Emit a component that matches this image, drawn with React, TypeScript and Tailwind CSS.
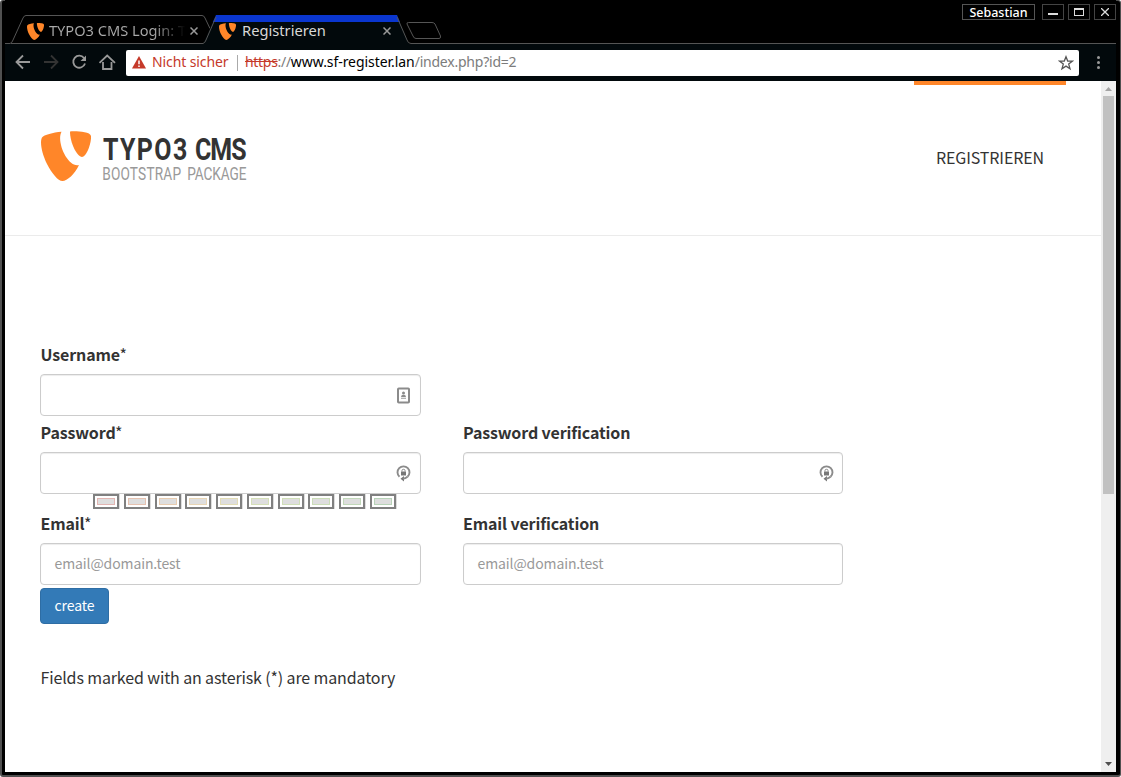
import React from 'react';

const bodyFont = "font-['Noto_Sans_CJK_SC','Open_Sans',sans-serif]";
const chromeFont = "font-['Noto_Sans','Open_Sans',sans-serif]";

function Shield({ size }: { size: number }) {
  return (
    <svg width={size} height={size} viewBox="0 0 50 50" className="block shrink-0" fill="#ff8629">
      <path d="M20.500 0.800C12 1.500 3 4 1 6.500C-1.500 11 1 23 6 33C11 42.500 17 50 21.500 50C26 50 34 43 38 34C27 37 15 11 20.500 0.800Z" />
      <path d="M29 0.600C31 0 49 0 50 5C50.500 13 45 26 41 26C36 26 29 12 29 0.600Z" />
    </svg>
  );
}

function TabClose() {
  return (
    <svg width="8" height="8" viewBox="0 0 8 8" className="block shrink-0" stroke="#999" strokeWidth="1.5">
      <path d="M0.500 0.500L7.500 7.500M7.500 0.500L0.500 7.500" />
    </svg>
  );
}

function TabStrip() {
  return (
    <div className="relative h-[44px] shrink-0 bg-black">
      <svg width="1111" height="44" viewBox="5 0 1111 44" className="absolute left-0 top-0" fill="none" stroke="#555" strokeWidth="1">
        <path d="M4 43.500H10Q12 43 13 40L23 18Q24 15.500 26 15.500H202Q204 15.500 205 18L210 28.500" />
        <path d="M11 43.500H203" />
        <path d="M203 44L216 15H397L409 44Z" fill="#02090c" stroke="none" />
        <path d="M212.900 22L216 15H397L400 22Z" fill="#0a36cf" stroke="none" />
        <path d="M203 43.500Q205 43 206 40L216 17M397 17L407 40Q408 43.500 411 43.500H1116" />
        <path d="M408.500 22.500H432Q434 22.500 435 24L440.500 36Q441 38.500 439 38.500H416Q414 38.500 413 36L407 24Q406.500 22.500 408.500 22.500Z" />
      </svg>
      <div className={`relative flex items-start pt-[20px] text-[15px] leading-[20px] ${chromeFont}`}>
        <div className="ml-[22px] flex w-[173px] items-center">
          <Shield size={17} />
          <span className="ml-[5px] w-[139px] whitespace-nowrap bg-linear-to-r from-[#aaa] from-75% to-transparent to-98% bg-clip-text pb-[2px] text-[14.6px] text-transparent">TYPO3 CMS Login: T</span>
          <span className="ml-[2px]"><TabClose /></span>
        </div>
        <div className="ml-[19px] flex w-[173px] items-center text-[#d8d8d8]">
          <Shield size={17} />
          <span className="ml-[6px] w-[141px] pb-[2px] text-[14.7px]">Registrieren</span>
          <TabClose />
        </div>
      </div>
      <div className="absolute right-0 top-[4px] flex h-4 items-center">
        <div className="mr-[7px] flex h-4 w-[73px] items-center justify-center border border-[#555] pt-[2px] font-['Noto_Sans',sans-serif] text-[12.5px] font-medium leading-none text-white">Sebastian</div>
        <div className="mr-1 flex h-4 w-[22px] items-center justify-center border border-[#444]"><i className="mt-[3px] h-[2px] w-[10px] bg-[#ddd]" /></div>
        <div className="mr-1 flex h-4 w-[22px] items-center justify-center border border-[#444]"><i className="h-2 w-[10px] border border-t-2 border-[#ddd]" /></div>
        <div className="flex h-4 w-[22px] items-center justify-center border border-[#444]">
          <svg width="8" height="8" viewBox="0 0 8 8" stroke="#ddd" strokeWidth="1.3"><path d="M0 0L8 8M8 0L0 8" /></svg>
        </div>
      </div>
    </div>
  );
}

function Toolbar() {
  return (
    <div className="flex h-[37px] shrink-0 items-center bg-[#02090c]">
      <svg width="121" height="37" viewBox="5 44 121 37" className="shrink-0" fill="none" stroke="#999" strokeWidth="1.8">
        <path d="M30 62H17M23 55.500L16.500 62L23 68.500" />
        <path d="M44 62H57M51 55.500L57.500 62L51 68.500" stroke="#333" />
        <path d="M84 58A6 6 0 1 0 85 63.500" />
        <path d="M86 55.500V61H80.500Z" fill="#999" stroke="none" />
        <path d="M103 62V69H111.500V62M99.500 62.800L107.200 55.500L115 62.800" />
      </svg>
      <div className={`flex h-[26px] w-[953px] items-center rounded-[2px] bg-white text-[14px] ${chromeFont}`}>
        <svg width="14" height="13" viewBox="0 0 14 13" className="mb-px ml-[6px] shrink-0"><path d="M7 0L14 12.500H0Z" fill="#c53929" /><path d="M7 4.500V8.300M7 9.500V11" stroke="#fff" strokeWidth="1.500" /></svg>
        <span className="mb-[2px] ml-[6px] w-[77px] whitespace-nowrap text-[14px] tracking-[-0.1px] text-[#c53929]">Nicht sicher</span>
        <i className="ml-[8px] h-[16px] w-px bg-[#aaa]" />
        <span className="mb-[2px] ml-[7px] whitespace-nowrap tracking-[-0.22px] text-[#7c7c7c]">
          <span className="tracking-[-0.3px]"><span className="text-[#c53929] line-through">https</span>://</span><span className="tracking-[-0.06px] text-black">www.sf-register.lan</span>/index.php?id=2
        </span>
        <svg width="16" height="16" viewBox="0 0 16 16" className="ml-auto mr-[5px]" fill="none" stroke="#555" strokeWidth="1.3"><path d="M8 1.700L9.700 6L14.300 6.200L10.700 9.100L12 13.700L8 11.100L4 13.700L5.300 9.100L1.700 6.200L6.300 6Z" /></svg>
      </div>
      <div className="ml-[18px] flex flex-col gap-[2px]"><i className="size-[3px] rounded-full bg-[#999]" /><i className="size-[3px] rounded-full bg-[#999]" /><i className="size-[3px] rounded-full bg-[#999]" /></div>
    </div>
  );
}

function UserIcon() {
  return (
    <svg width="13" height="17" viewBox="0 0 13 17" fill="none">
      <rect x="1" y="1.500" width="11" height="14" rx="0.800" stroke="#8b8b8b" strokeWidth="2" />
      <circle cx="6.500" cy="6" r="1.500" fill="#8b8b8b" /><path d="M4 10Q4 7.800 6.500 7.800T9 10Z" fill="#8b8b8b" />
      <path d="M4 11.300H9" stroke="#aaa" strokeWidth="1.200" />
    </svg>
  );
}

function LockIcon() {
  return (
    <svg width="15" height="18" viewBox="0 0 15 18" fill="none">
      <path d="M3.500 12.800A6 6 0 1 1 11.500 12.800" stroke="#8b8b8b" strokeWidth="1.900" />
      <path d="M5 7.500H10V11.500H5Z" fill="#777" /><path d="M6 7.500V6.500Q6 5.300 7.500 5.300T9 6.500V7.500" stroke="#888" />
      <path d="M4.500 14.700L8 12V17.400Z" fill="#777" /><path d="M7 14.700Q9.500 14.700 11.500 12.800" stroke="#8b8b8b" strokeWidth="1.900" />
    </svg>
  );
}

type FieldProps = {
  label: string;
  required?: boolean;
  placeholder?: string;
  icon?: React.ReactNode;
  labelClass?: string;
  widthClass?: string;
};

function Field({ label, required, placeholder, icon, labelClass = 'h-9 pb-[4px] pl-[0.5px]', widthClass = 'w-[381px] pr-0' }: FieldProps) {
  return (
    <div className={widthClass}>
      <div className={`flex items-center text-[16px] leading-6 tracking-[-0.13px] text-[#333] ${labelClass}`}>
        <b className="font-bold">{label}</b>
        {required && <span className="-ml-[0.5px]">*</span>}
      </div>
      <div className="flex h-[42px] items-center rounded-[4px] border border-[#ccc] bg-white pl-[14px] pr-[9px] shadow-[inset_0_1px_1px_rgba(0,0,0,0.075)]">
        {placeholder && <span className="-ml-[0.5px] pb-[2px] text-[14px] leading-5 tracking-[-0.1px] text-[#999]">{placeholder}</span>}
        <span className="ml-auto flex w-[15px] justify-center">{icon}</span>
      </div>
    </div>
  );
}

const meterColors = ['border-[#e2b5b2]', 'border-[#e6c2b0]', 'border-[#e8ccb0]', 'border-[#e8d5b5]', 'border-[#e2dcb5]', 'border-[#d5dfb8]', 'border-[#d0dfb8]', 'border-[#cbddb8]', 'border-[#c2d8ba]', 'border-[#b8d3b8]'];

function StrengthMeter() {
  return (
    <div className="flex h-[15px] gap-[4.780px] pl-[53px]">
      {meterColors.map((c) => (
        <div key={c} className="h-[15px] w-[26px] shrink-0 border-2 border-[#808080] bg-white p-[2px] shadow-[1px_0_0_#ddd]">
          <div className={`h-full border bg-[#dedede] ${c}`} />
        </div>
      ))}
    </div>
  );
}

function Logo() {
  return (
    <div className="flex h-[51px] gap-[12px]">
      <Shield size={50} />
      <svg width="160" height="56" viewBox="0 0 160 56" className="overflow-visible font-['Roboto',sans-serif]">
        <g transform="scale(0.78 1)">
          <text x="0" y="28.500" fontSize="32" fontWeight="700" fill="#333" textLength="108">TYPO3</text>
          <text x="118" y="28.500" fontSize="32" fontWeight="700" fill="#333" textLength="66">CMS</text>
          <text x="-1" y="49" fontSize="17.500" fontWeight="400" fill="#999" textLength="101">BOOTSTRAP</text>
          <text x="108" y="49" fontSize="17.500" fontWeight="400" fill="#999" textLength="76">PACKAGE</text>
        </g>
      </svg>
    </div>
  );
}

function Page() {
  return (
    <main className={`flex-1 bg-white text-[#333] ${bodyFont}`}>
      <header className="flex h-[155px] justify-between border-b border-[#ebebeb] pl-[36px] pr-[35px]">
        <div className="pt-[50px]"><Logo /></div>
        <nav className="flex w-[152px] items-center justify-center border-t-4 border-[#ff8629] pb-[6px] text-[16px] leading-6 tracking-[-0.12px]">REGISTRIEREN</nav>
      </header>
      <form className="flex flex-col items-start pl-[35px] pt-[102px]">
        <Field label="Username" required icon={<UserIcon />} />
        <div className="flex gap-[42px]">
          <Field label="Password" required icon={<LockIcon />} />
          <Field label="Password verification" labelClass="h-9 pb-[4px]" widthClass="w-[380px]" icon={<span className="-mr-[2px]"><LockIcon /></span>} />
        </div>
        <StrengthMeter />
        <div className="flex gap-[42px]">
          <Field label="Email" required placeholder="email@domain.test" labelClass="h-[34px] pb-[6px] pl-[0.5px]" />
          <Field label="Email verification" widthClass="w-[380px]" placeholder="email@domain.test" labelClass="h-[34px] pb-[6px]" />
        </div>
        <button type="button" className="mt-[3px] flex h-9 w-[69px] items-center justify-center rounded-[4px] border border-[#2e6da4] bg-[#337ab7] pb-[2px] text-[14px] leading-5 tracking-[-0.1px] text-white">create</button>
        <p className="mt-[41px] pl-[0.5px] text-[16px] leading-6 tracking-[-0.13px]">Fields marked with an asterisk (*) are mandatory</p>
      </form>
    </main>
  );
}

function Scrollbar() {
  return (
    <div className="flex w-[15px] shrink-0 flex-col items-center bg-[#efefef]">
      <svg width="15" height="15" viewBox="0 0 15 15" className="block"><path d="M4 10L7.500 6L11 10Z" fill="#a3a3a3" /></svg>
      <div className="h-[398px] w-[11px] bg-[#c1c1c1]" />
      <svg width="15" height="15" viewBox="0 0 15 15" className="mt-auto block"><path d="M4 5L7.500 9L11 5Z" fill="#505050" /></svg>
    </div>
  );
}

export default function App() {
  return (
    <div className="h-[777px] w-[1121px] overflow-hidden bg-white">
      <div className="flex h-[777px] w-[1121px] flex-col rounded-[3px] border-b-2 border-l-2 border-r border-t border-[#505050] bg-black pb-[3px] pl-[3px] pr-[4px]">
        <div className="-mt-px"><TabStrip /></div>
        <Toolbar />
        <div className="flex min-h-0 flex-1"><Page /><Scrollbar /></div>
      </div>
    </div>
  );
}
